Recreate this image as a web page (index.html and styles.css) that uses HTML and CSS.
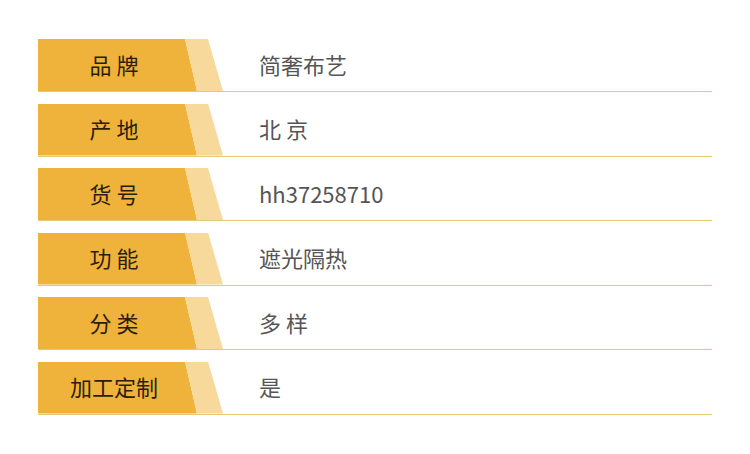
FILE: index.html
```html
<!DOCTYPE html>
<html lang="zh">
<head>
<meta charset="utf-8">
<link rel="stylesheet" href="styles.css">
</head>
<body>
<div class="table">
  <div class="row"><div class="label"><span>品 牌</span></div><div class="value">简奢布艺</div></div>
  <div class="row"><div class="label"><span>产 地</span></div><div class="value">北 京</div></div>
  <div class="row"><div class="label"><span>货 号</span></div><div class="value">hh37258710</div></div>
  <div class="row"><div class="label"><span>功 能</span></div><div class="value">遮光隔热</div></div>
  <div class="row"><div class="label"><span>分 类</span></div><div class="value">多 样</div></div>
  <div class="row"><div class="label"><span>加工定制</span></div><div class="value">是</div></div>
</div>
</body>
</html>
```
FILE: styles.css
```css
html, body {
  margin: 0;
  padding: 0;
  background: #ffffff;
}
body {
  font-family: "Noto Sans CJK SC", "Noto Sans", sans-serif;
}
.table {
  padding: 39px 38px 0 38px;
  display: flex;
  flex-direction: column;
  gap: 11.5px;
}
.row {
  display: flex;
  align-items: center;
  height: 52px;
  border-bottom: 1px solid #e6c978;
}
.label {
  position: relative;
  width: 185px;
  height: 52px;
  flex: none;
}
.label::before {
  content: "";
  position: absolute;
  inset: 0;
  background: #efb33b;
  clip-path: polygon(0 0, 147px 0, 159px 100%, 0 100%);
}
.label::after {
  content: "";
  position: absolute;
  inset: 0;
  background: #f8d99c;
  clip-path: polygon(147px 0, 170px 0, 185px 100%, 159px 100%);
}
.label span {
  position: relative;
  z-index: 1;
  display: flex;
  align-items: center;
  justify-content: center;
  width: 152px;
  height: 52px;
  padding-bottom: 3px;
  box-sizing: border-box;
  font-size: 22px;
  font-weight: 400;
  color: #2b1d0c;
  line-height: 1;
  white-space: pre;
}
.value {
  margin-left: 36px;
  padding-bottom: 3px;
  font-size: 22px;
  color: #555555;
  line-height: 1;
  white-space: pre;
}
```
